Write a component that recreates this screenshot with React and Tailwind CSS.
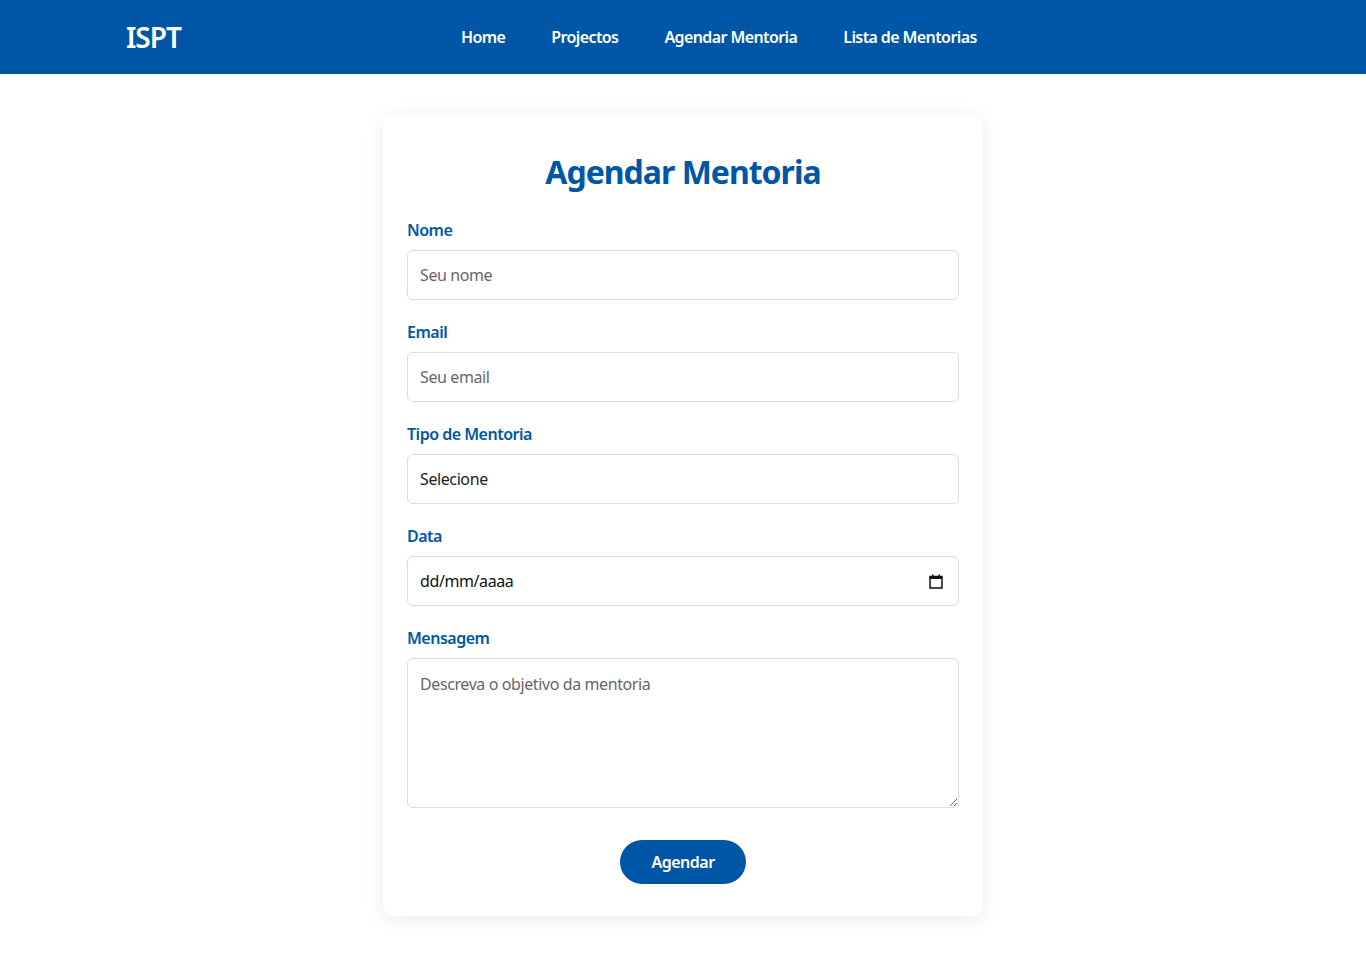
import { useState } from "react";

const font = { fontFamily: '"Noto Sans", "Open Sans", sans-serif' };

const NavLink = ({ children }) => (
  <a href="#" className="text-white text-base font-semibold leading-6 tracking-[-0.6px]">
    {children}
  </a>
);

const Label = ({ children, htmlFor }) => (
  <label
    htmlFor={htmlFor}
    className="block text-[#0056a6] text-base font-semibold leading-6 tracking-[-0.5px] mb-2"
  >
    {children}
  </label>
);

const baseCls =
  "block w-full h-[50px] px-3 border border-[#dcdcdc] rounded-md bg-white text-base tracking-[-0.4px] text-[#222] outline-none";

export default function App() {
  const [tipo, setTipo] = useState("");

  return (
    <div className="min-h-screen bg-white" style={font}>
      {/* Header */}
      <header className="h-[74px] bg-[#0056a6] flex items-center px-[126px]">
        <div className="w-[54px] text-white text-[28px] font-semibold leading-none tracking-[-1px]">ISPT</div>
        <nav className="flex items-center gap-[46px] ml-[281px]">
          <NavLink>Home</NavLink>
          <NavLink>Projectos</NavLink>
          <NavLink>Agendar Mentoria</NavLink>
          <NavLink>Lista de Mentorias</NavLink>
        </nav>
      </header>

      {/* Form card */}
      <main className="flex justify-center pt-10 pb-10">
        <form
          className="w-[600px] bg-white rounded-xl shadow-[0_4px_20px_rgba(0,0,0,0.08)] px-6 pt-6 pb-8"
          onSubmit={(e) => e.preventDefault()}
        >
          <h2 className="text-center text-[#0056a6] text-[32px] font-bold leading-10 tracking-[-1px] mt-[14px] mb-[26px]">
            Agendar Mentoria
          </h2>

          <div className="mb-5">
            <Label htmlFor="nome">Nome</Label>
            <input id="nome" type="text" placeholder="Seu nome" className={baseCls + " placeholder:text-[#666]"} />
          </div>

          <div className="mb-5">
            <Label htmlFor="email">Email</Label>
            <input id="email" type="email" placeholder="Seu email" className={baseCls + " placeholder:text-[#666]"} />
          </div>

          <div className="mb-5">
            <Label htmlFor="tipo">Tipo de Mentoria</Label>
            <select
              id="tipo"
              value={tipo}
              onChange={(e) => setTipo(e.target.value)}
              className={baseCls + " appearance-none"}
            >
              <option value="">Selecione</option>
              <option value="academica">Académica</option>
              <option value="profissional">Profissional</option>
              <option value="projecto">Projecto</option>
            </select>
          </div>

          <div className="mb-5">
            <Label htmlFor="data">Data</Label>
            <div className="relative">
              <input
                id="data"
                type="text"
                placeholder="dd/mm/aaaa"
                className={baseCls + " pr-10 placeholder:text-[#111]"}
              />
              <svg
                className="absolute right-[16px] top-[18px] pointer-events-none"
                width="14"
                height="15"
                viewBox="0 0 14 15"
              >
                <rect x="1" y="2.5" width="12" height="11.5" fill="none" stroke="#111" strokeWidth="1.5" />
                <rect x="1" y="2" width="12" height="3" fill="#111" />
                <rect x="3" y="0.5" width="1.5" height="2" fill="#111" />
                <rect x="9.5" y="0.5" width="1.5" height="2" fill="#111" />
              </svg>
            </div>
          </div>

          <div className="mb-8">
            <Label htmlFor="mensagem">Mensagem</Label>
            <textarea
              id="mensagem"
              placeholder="Descreva o objetivo da mentoria"
              className="block w-full h-[150px] px-3 py-[13px] border border-[#dcdcdc] rounded-md bg-white text-base leading-6 tracking-[-0.4px] text-[#222] placeholder:text-[#666] outline-none"
            />
          </div>

          <div className="flex justify-center">
            <button
              type="submit"
              className="h-11 w-[126px] rounded-full bg-[#0056a6] text-white text-base font-semibold tracking-[-0.5px]"
            >
              Agendar
            </button>
          </div>
        </form>
      </main>
    </div>
  );
}
